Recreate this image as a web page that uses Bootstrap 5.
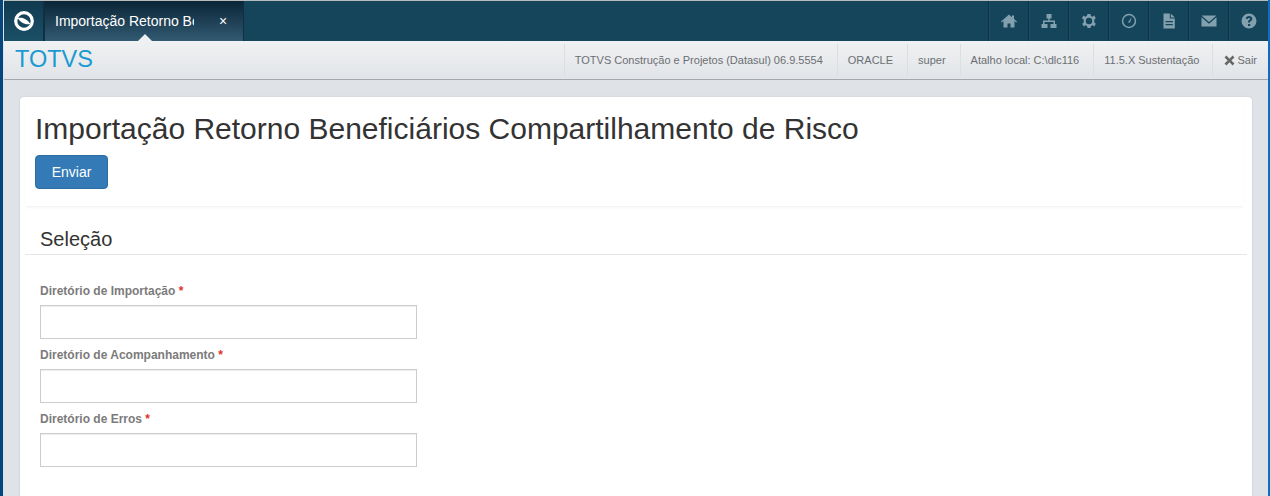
<!DOCTYPE html>
<html lang="pt-BR">
<head>
  <meta charset="UTF-8" />
  <meta name="viewport" content="width=device-width, initial-scale=1.0" />
  <link href="https://cdn.jsdelivr.net/npm/bootstrap@5.3.3/dist/css/bootstrap.min.css" rel="stylesheet" />
  <title>Importação Retorno Beneficiários Compartilhamento de Risco</title>
  <style>
    html, body { height: 100%; overflow: hidden; }
    body {
      font-family: "Liberation Sans", Arial, sans-serif;
      font-size: 14px;
      color: #333;
      background: #dfe3e7;
    }
    .app-frame {
      height: 496px; padding-left: 4px; border-right: 2px solid #0a6fc4;
      background: linear-gradient(90deg, #06467f 3px, #dfe3e7 3px);
    }
    .top-bar { height: 41px; background: #14455b; border-top: 1px solid #b9bcbd; }
    .brand-cell { width: 40px; background: linear-gradient(#103a50, #1b5067); border-right: 1px solid #0d3044; }
    .tab-cell {
      width: 200px; color: #fff; font-size: 14px; padding-left: 10px; white-space: nowrap;
      background: linear-gradient(#0b2537, #325a72); border-right: 1px solid #0d3044; border-left: 1px solid #0d3044;
    }
    .tab-title { width: 139px; flex-shrink: 0; overflow: hidden; }
    .tab-close { margin-left: 25px; font-size: 14px; }
    .tab-cell::after {
      content: ""; position: absolute; left: 93px; bottom: 0;
      border-left: 7px solid transparent; border-right: 7px solid transparent; border-bottom: 7px solid #eeeff0;
    }
    .icon-cell { width: 40px; border-left: 1px solid #0d3044; box-shadow: inset 1px 0 0 #1d5066; }
    .icon-cell svg { width: 16px; height: 16px; fill: #83a0ae; }
    .sub-bar { height: 39px; background: linear-gradient(#f0f1f2, #e1e4e8); border-bottom: 1px solid #a5a7a8; }
    .sub-logo { font-size: 23.5px; color: #1a9ad1; padding-left: 11px; line-height: 1; }
    .sub-item { font-size: 11px; color: #6b6f73; padding: 0 14px 0 10px; margin: 3px 0; border-left: 1px solid #dcdfe2; white-space: nowrap; }
    .sub-version { padding-right: 13px; }
    .sub-exit { padding: 0 11px; }
    .sub-exit svg { width: 11px; height: 11px; fill: #666; margin-right: 2px; }
    .page-sheet {
      margin: 17px 16px 0 16px; height: 400px; background: #fff; border-radius: 4px 4px 0 0;
      box-shadow: 0 0 2px #c3c6c9;
    }
    .page-head { padding: 14px 16px 16px 10px; margin: 0 8px 0 5px; box-shadow: 0 2px 3px -1px #eeeeee; height: 109px; }
    .page-title { font-size: 30px; line-height: 36px; font-weight: 400; margin: 0 0 8px; color: #333; }
    .send-btn { background: #337ab7; border: 1px solid #2e6da4; color: #fff; font-size: 14px; width: 73px; height: 34px; padding: 0; border-radius: 4px; }
    .group-title { font-size: 20px; line-height: 24px; margin: 0 5px 0 5px; padding: 21px 0 3px 15px; border-bottom: 1px solid #e5e5e5; font-weight: 400; }
    .form-area { padding: 28px 0 0 20px; width: 398px; }
    .field-label { font-size: 12px; font-weight: 700; color: #7b7b7b; line-height: 17px; margin-bottom: 5px; display: block; }
    .field-label span { color: #e0322b; }
    .field-input { height: 34px; width: 377px; border: 1px solid #ccc; border-radius: 0; margin-bottom: 8px; box-shadow: inset 0 1px 1px rgba(0,0,0,.075); }
  </style>
</head>
<body>
  <div class="app-frame">
    <div class="top-bar d-flex">
      <div class="brand-cell d-flex align-items-center justify-content-center">
        <svg width="22" height="22" viewBox="0 0 22 22">
          <circle cx="11" cy="11" r="8.300" fill="none" stroke="#fff" stroke-width="3.200"/>
          <path d="M4.500 8C8 7 13.500 8 17.500 14 14 15 8.500 14 4.500 8Z" fill="#fff"/>
        </svg>
      </div>
      <div class="tab-cell position-relative d-flex align-items-center">
        <div class="tab-title">Importação Retorno Beneficiários</div>
        <span class="tab-close">×</span>
      </div>
      <div class="d-flex ms-auto">
        <div class="icon-cell d-flex align-items-center justify-content-center">
          <svg viewBox="0 0 16 16"><path d="M8 1.500 0 8.500l.8.9L2.500 8v6.500h4v-4h3v4h4V8l1.700 1.400.8-.9-3-2.600V2.500h-2v1.700z"/></svg>
        </div>
        <div class="icon-cell d-flex align-items-center justify-content-center">
          <svg viewBox="0 0 16 16"><path d="M5.500 1h5v4.500H8.700v2H14V11h1.500v4h-6v-4H12.500V9h-9v2h3v4H.500v-4H2V7.500h5.300v-2H5.500z"/></svg>
        </div>
        <div class="icon-cell d-flex align-items-center justify-content-center">
          <svg viewBox="0 0 16 16"><path fill-rule="evenodd" d="M6.500 1h3l.4 2 1.700.7 1.700-1.100 1.500 2.600-1.500 1.300v3l1.500 1.300-1.500 2.600-1.700-1.100-1.700.7-.4 2h-3l-.4-2-1.700-.7-1.700 1.100-1.500-2.600 1.500-1.300v-3L.900 5.200l1.500-2.600 1.700 1.100 1.700-.7zM8 4.800a3.200 3.200 0 1 0 0 6.400 3.200 3.200 0 0 0 0-6.400z"/></svg>
        </div>
        <div class="icon-cell d-flex align-items-center justify-content-center">
          <svg viewBox="0 0 16 16"><path fill-rule="evenodd" d="M8 .8a7.200 7.200 0 1 1 0 14.400A7.200 7.200 0 0 1 8 .8zm0 1.500a5.700 5.700 0 1 0 0 11.400A5.700 5.700 0 0 0 8 2.300z"/><path d="M10.800 4 9 9.500H6.800z"/></svg>
        </div>
        <div class="icon-cell d-flex align-items-center justify-content-center">
          <svg viewBox="0 0 16 16"><path fill-rule="evenodd" d="M2.500 .5H8.800v5h5v10H2.500zM4.500 8v1.300h7.300V8zm0 3v1.300h7.300V11zM9.800 .5l4 4h-4z"/></svg>
        </div>
        <div class="icon-cell d-flex align-items-center justify-content-center">
          <svg viewBox="0 0 16 16"><path d="M.500 2.500h15L8 9zM.500 4.300V13.500h15V4.300L8 10.800z"/></svg>
        </div>
        <div class="icon-cell d-flex align-items-center justify-content-center">
          <svg viewBox="0 0 16 16"><path fill-rule="evenodd" d="M8 .5a7.500 7.500 0 1 1 0 15 7.500 7.500 0 0 1 0-15zM7 11v2h2.200v-2zM8 3C6 3 4.800 4.100 4.700 5.800l2.100.3c.1-.8.500-1.200 1.200-1.200.6 0 1 .4 1 .9 0 .5-.3.8-.9 1.300-.8.600-1.100 1.200-1.100 2.100v.4h2.100v-.3c0-.5.200-.7.800-1.200.8-.6 1.400-1.300 1.400-2.400C11.300 4 10 3 8 3z"/></svg>
        </div>
      </div>
    </div>

    <div class="sub-bar d-flex align-items-center">
      <div class="sub-logo me-auto">TOTVS</div>
      <div class="sub-item d-flex align-items-center align-self-stretch">TOTVS Construção e Projetos (Datasul) 06.9.5554</div>
      <div class="sub-item d-flex align-items-center align-self-stretch">ORACLE</div>
      <div class="sub-item d-flex align-items-center align-self-stretch">super</div>
      <div class="sub-item d-flex align-items-center align-self-stretch">Atalho local: C:\dlc116</div>
      <div class="sub-item sub-version d-flex align-items-center align-self-stretch">11.5.X Sustentação</div>
      <div class="sub-item sub-exit d-flex align-items-center align-self-stretch">
        <svg viewBox="0 0 10 10"><path d="M2.200.5 5 3.300 7.800.5 9.500 2.200 6.700 5l2.800 2.800-1.700 1.700L5 6.700 2.200 9.500.500 7.800 3.300 5 .500 2.200z"/></svg>Sair
      </div>
    </div>

    <div class="page-sheet">
      <div class="page-head">
        <h1 class="page-title">Importação Retorno Beneficiários Compartilhamento de Risco</h1>
        <button type="button" class="btn send-btn">Enviar</button>
      </div>
      <h2 class="group-title">Seleção</h2>
      <form class="form-area">
        <label class="field-label">Diretório de Importação <span>*</span></label>
        <input type="text" class="form-control field-input" />
        <label class="field-label">Diretório de Acompanhamento <span>*</span></label>
        <input type="text" class="form-control field-input" />
        <label class="field-label">Diretório de Erros <span>*</span></label>
        <input type="text" class="form-control field-input" />
      </form>
    </div>
  </div>
  <script src="https://cdn.jsdelivr.net/npm/bootstrap@5.3.3/dist/js/bootstrap.bundle.min.js"></script>
</body>
</html>
